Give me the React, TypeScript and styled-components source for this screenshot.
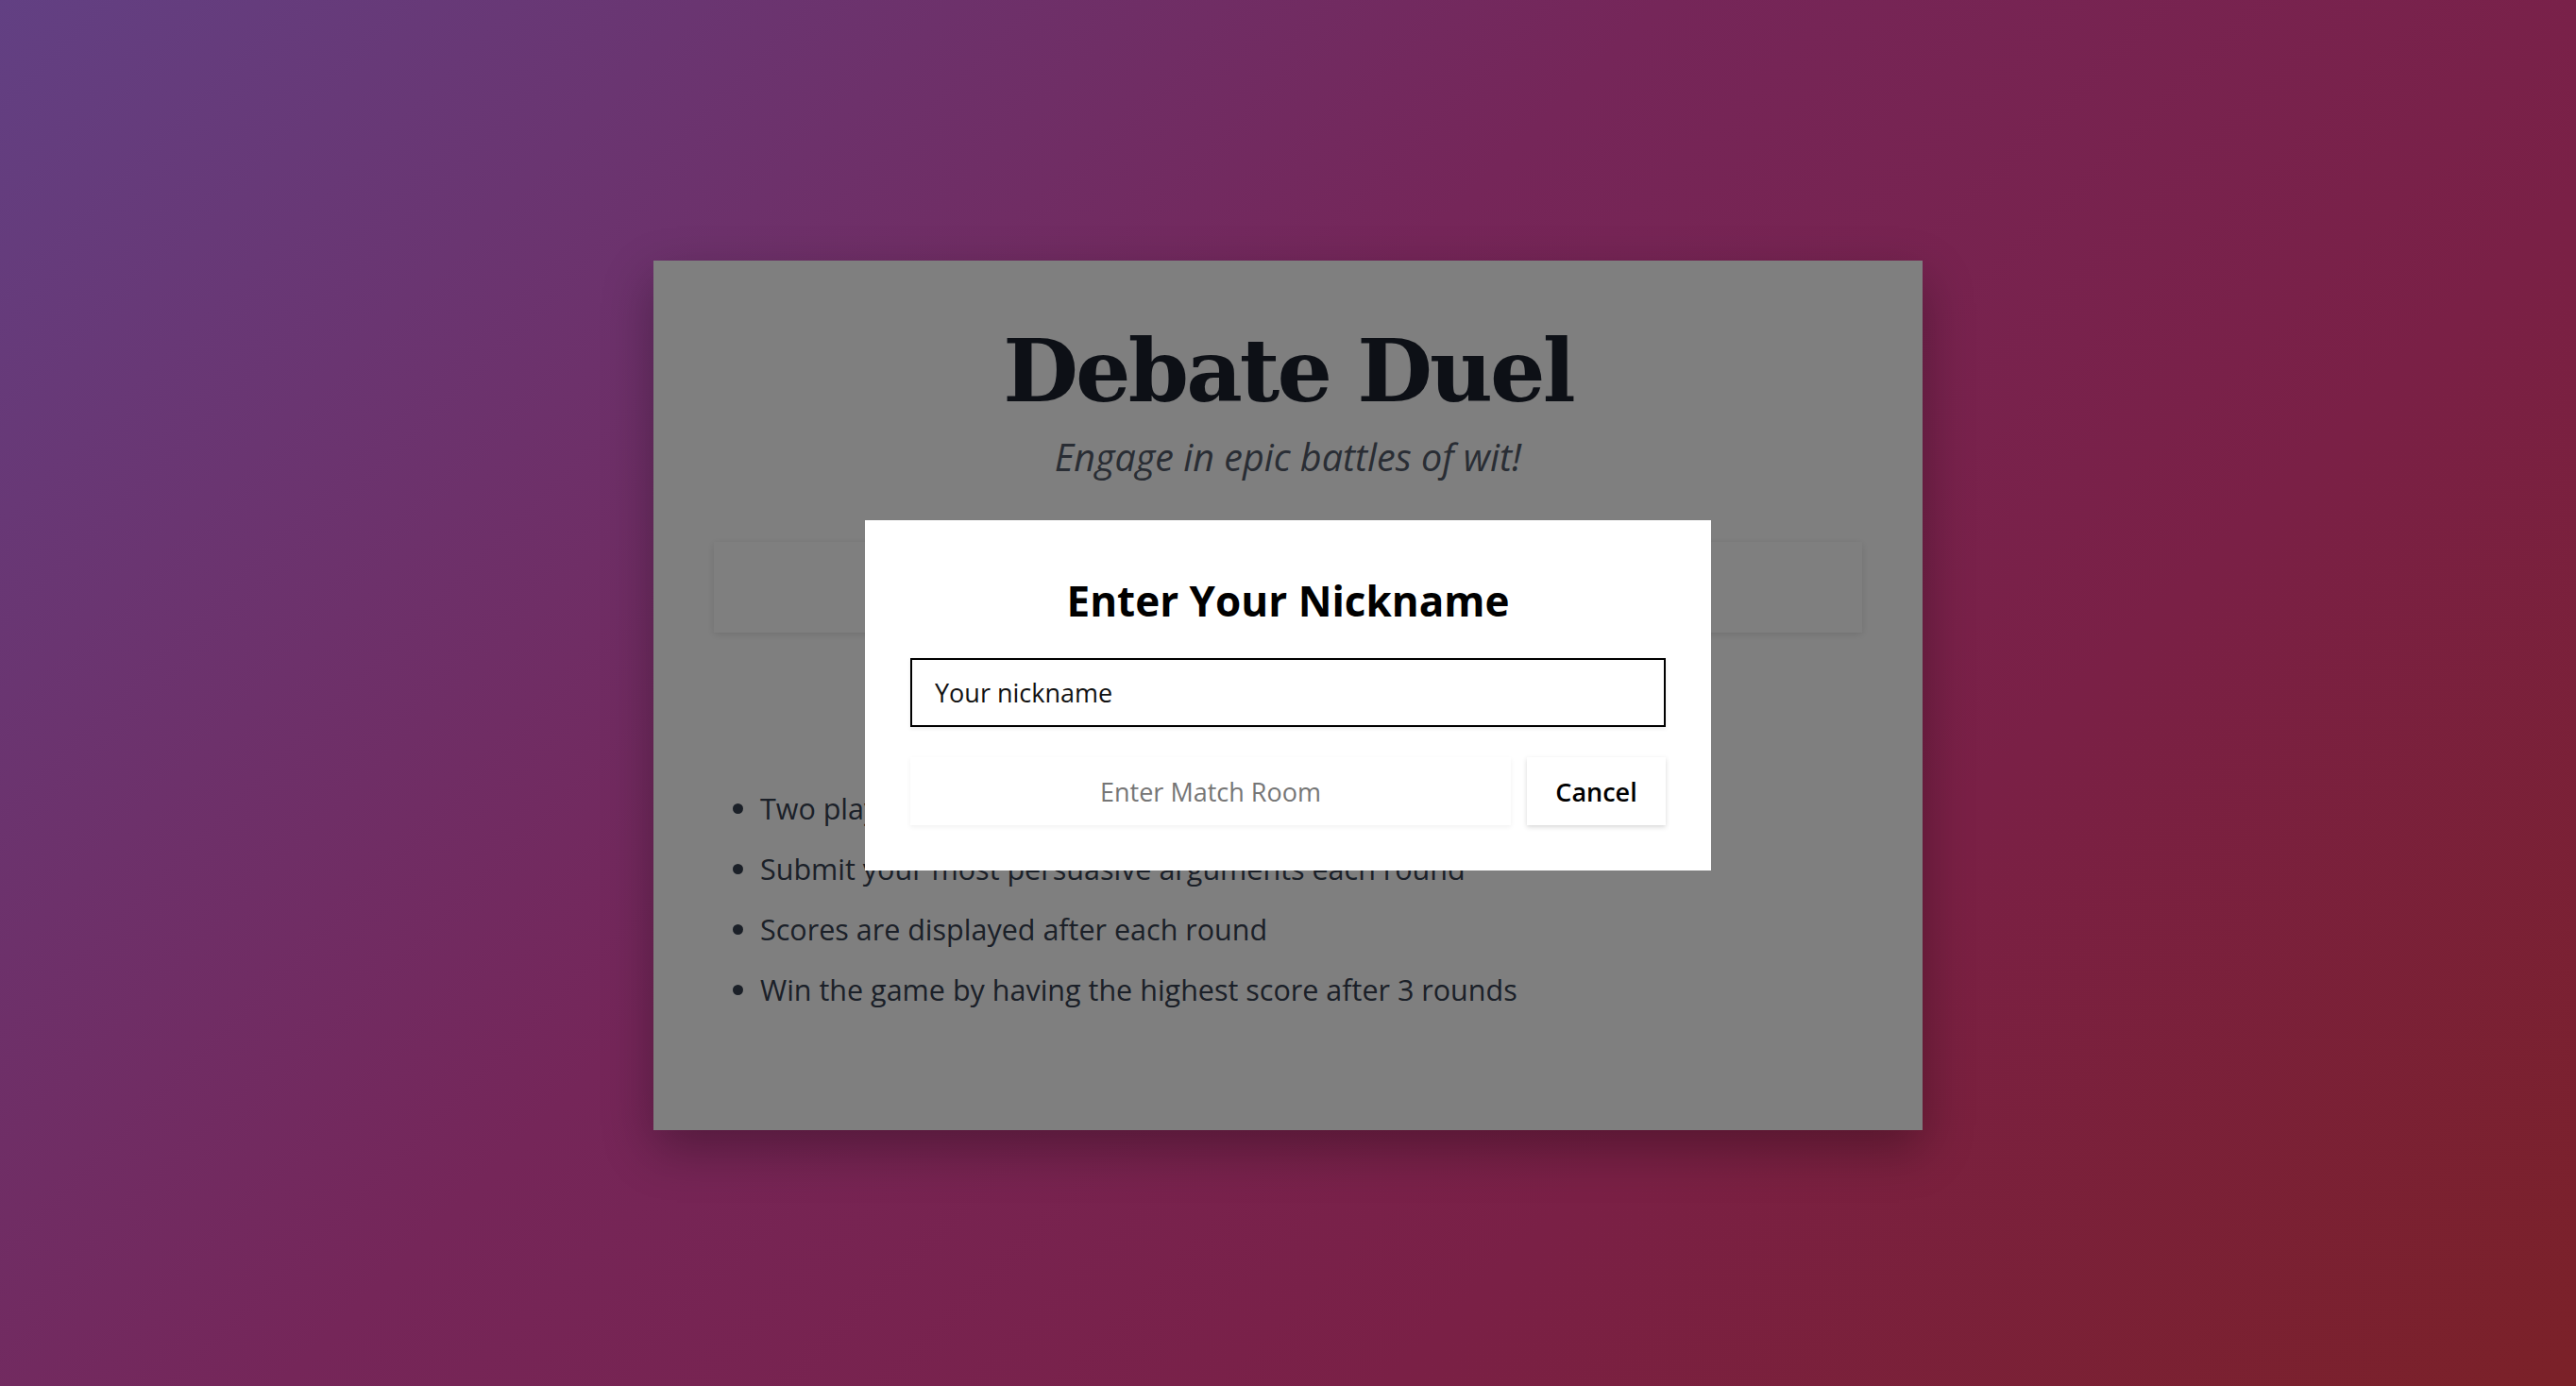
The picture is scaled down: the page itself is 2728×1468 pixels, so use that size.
import * as React from "react";
import styled, { createGlobalStyle } from "styled-components";

const GlobalStyle = createGlobalStyle`
  html, body {
    margin: 0;
    padding: 0;
  }
  body {
    font-family: "Open Sans", "Noto Sans", sans-serif;
  }
`

const Page = styled.div`
  min-height: 100vh;
  box-sizing: border-box;
  padding-top: 5px;
  display: flex;
  align-items: center;
  justify-content: center;
  background: linear-gradient(135deg, #624083 0%, #752659 42%, #7a2046 70%, #7b2128 100%);
`

const Card = styled.div`
  position: relative;  /*the overlay is laid over the whole card*/
  width: 1344px;
  box-sizing: border-box;
  padding: 62px 64px 125px;
  background: #ffffff;
  box-shadow: 0 20px 50px rgba(0, 0, 0, 0.3);
`

const Title = styled.h1`
  margin: 0;
  text-align: center;
  font-family: "DejaVu Serif", "Liberation Serif", serif;
  font-weight: bold;
  font-size: 92px;
  line-height: 110px;
  letter-spacing: -2.9px;
  color: #1a202c;
`

const Tagline = styled.p`
  margin: 9px 0 63px;
  text-align: center;
  font-style: italic;
  font-size: 39.5px;
  line-height: 54px;
  color: #535b69;
`

const Panel = styled.div`
  height: 96px;
  background: #ffffff;
  box-shadow: 0 2px 8px rgba(0, 0, 0, 0.12);
`

const Rules = styled.ul`
  margin: 162px 0 0;
  padding-left: 49px;
  color: #374151;
`

const Rule = styled.li`
  font-size: 30.5px;
  line-height: 48px;
  margin-bottom: 16px;
  &:last-child {
    margin-bottom: 0;
  }
`

const Overlay = styled.div`
  position: absolute;
  inset: 0;
  display: flex;
  align-items: center;
  justify-content: center;
  background: rgba(0, 0, 0, 0.5);
`

const Modal = styled.div`
  width: 896px;
  box-sizing: border-box;
  padding: 48px;
  background: #ffffff;
  display: flex;
  flex-direction: column;
`

const ModalTitle = styled.h2`
  margin: 11px 0 34px;
  text-align: center;
  font-size: 44px;
  line-height: 53px;
  font-weight: 700;
  color: #000000;
`

const NicknameInput = styled.input`
  height: 73px;
  box-sizing: border-box;
  padding: 0 24px;
  border: 2px solid #000000;
  border-radius: 0;
  outline: none;
  font-family: inherit;
  font-size: 27px;
  color: #000000;
  box-shadow: 0 2px 4px rgba(0, 0, 0, 0.08);
  &::placeholder {
    color: #111111;
    opacity: 1;
  }
`

const Actions = styled.div`
  margin-top: 32px;
  display: flex;
  gap: 17px;
`

const ActionButton = styled.button<{ $grow?: boolean; $muted?: boolean }>`
  flex: ${p => (p.$grow ? "1" : "0 0 147px")};
  height: 72px;
  border: none;
  border-radius: 0;
  background: #ffffff;
  font-family: inherit;
  font-size: 27px;
  font-weight: ${p => (p.$muted ? 400 : 600)};
  color: ${p => (p.$muted ? "#767676" : "#000000")};
  box-shadow: 0 2px 5px rgba(0, 0, 0, ${p => (p.$muted ? 0.06 : 0.16)});
  cursor: ${p => (p.$muted ? "default" : "pointer")};
`

const rules = [
  "Two players compete in a battle of arguments",
  "Submit your most persuasive arguments each round",
  "Scores are displayed after each round",
  "Win the game by having the highest score after 3 rounds",
]

export default function App() {
  return <Page>
    <GlobalStyle/>
    <Card>
      <Title>Debate Duel</Title>
      <Tagline>Engage in epic battles of wit!</Tagline>
      <Panel/>
      <Rules>
        {rules.map(r => <Rule key={r}>{r}</Rule>)}
      </Rules>
      <Overlay>
        <Modal>
          <ModalTitle>Enter Your Nickname</ModalTitle>
          <NicknameInput placeholder="Your nickname"/>
          <Actions>
            <ActionButton $grow $muted disabled>Enter Match Room</ActionButton>
            <ActionButton>Cancel</ActionButton>
          </Actions>
        </Modal>
      </Overlay>
    </Card>
  </Page>
}
